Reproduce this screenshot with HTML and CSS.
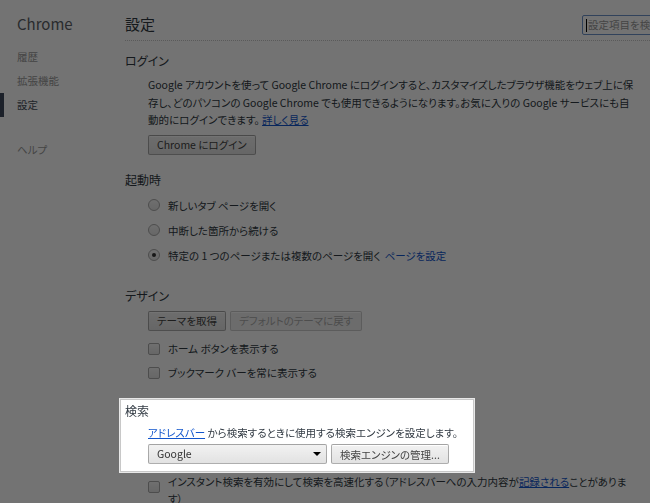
FILE: index.html
```html
<!DOCTYPE html>
<html lang="ja">
<head>
    <meta charset="UTF-8">
    <title>設定</title>
    <link rel="stylesheet" href="styles.css">
</head>
<body>

<div class="page">
    <!-- Left navigation -->
    <nav class="nav">
        <div class="brand">Chrome</div>
        <ul class="nav-list">
            <li>履歴</li>
            <li>拡張機能</li>
            <li class="selected">設定</li>
        </ul>
        <ul class="nav-list help">
            <li>ヘルプ</li>
        </ul>
    </nav>

    <main class="main">
        <header class="header">
            <h1 class="title">設定</h1>
            <div class="search"><span class="caret"></span>設定項目を検索</div>
        </header>

        <section class="section login">
            <h3>ログイン</h3>
            <div class="content">
                <p class="text">Google アカウントを使って Google Chrome にログインすると、カスタマイズしたブラウザ機能をウェブ上に保存し、どのパソコンの Google Chrome でも使用できるようになります。お気に入りの Google サービスにも自<br>動的にログインできます。 <a href="#" class="link">詳しく見る</a></p>
                <button class="btn">Chrome にログイン</button>
            </div>
        </section>

        <section class="section startup">
            <h3>起動時</h3>
            <div class="content">
                <div class="row"><span class="radio"></span>新しいタブ ページを開く</div>
                <div class="row"><span class="radio"></span>中断した箇所から続ける</div>
                <div class="row"><span class="radio checked"></span>特定の 1 つのページまたは複数のページを開く <a href="#" class="link plain">ページを設定</a></div>
            </div>
        </section>

        <section class="section design">
            <h3>デザイン</h3>
            <div class="content">
                <div class="btn-row">
                    <button class="btn">テーマを取得</button>
                    <button class="btn" disabled>デフォルトのテーマに戻す</button>
                </div>
                <div class="row check-row"><span class="checkbox"></span>ホーム ボタンを表示する</div>
                <div class="row check-row"><span class="checkbox"></span>ブックマーク バーを常に表示する</div>
            </div>
        </section>

        <!-- Highlighted section stays above the dimming layer -->
        <section class="section search-section">
            <h3>検索</h3>
            <div class="content">
                <p class="text"><a href="#" class="link">アドレスバー</a> から検索するときに使用する検索エンジンを設定します。</p>
                <div class="btn-row">
                    <div class="select">Google<span class="arrow"></span></div>
                    <button class="btn">検索エンジンの管理...</button>
                </div>
            </div>
        </section>

        <section class="section instant">
            <div class="content">
                <div class="wrap-row"><span class="checkbox"></span><span>インスタント検索を有効にして検索を高速化する（アドレスバーへの入力内容が<a href="#" class="link">記録される</a>ことがありま<br>す）</span></div>
            </div>
        </section>
    </main>
</div>

<div class="overlay"></div>

</body>
</html>
```

FILE: styles.css
```css
body {
    margin: 0;
    overflow: hidden;
    background: #fff;
    font-family: "Noto Sans CJK JP", "Noto Sans", sans-serif;
    font-size: 10.5px;
    font-feature-settings: "palt";
    color: #303942;
}

.page {
    display: flex;
    width: 740px;
}

/* Navigation */
.nav {
    width: 125px;
    flex-shrink: 0;
}

.brand {
    height: 41px;
    padding: 14px 0 0 17px;
    box-sizing: border-box;
    font-size: 15px;
    line-height: 20px;
    color: #5c6166;
}

.nav-list {
    list-style: none;
    margin: 4px 0 0;
    padding: 0;
}

.nav-list li {
    height: 24px;
    line-height: 24px;
    padding-left: 17px;
    color: #999;
}

.nav-list li.selected {
    color: #464e5a;
    border-left: 4px solid #3f4a5e;
    padding-left: 13px;
}

.nav-list.help {
    margin-top: 21px;
}

/* Main column */
.main {
    flex: 1;
}

.header {
    display: flex;
    justify-content: space-between;
    height: 41px;
    border-bottom: 1px dotted #c8c8c8;
    box-sizing: border-box;
}

.title {
    margin: 14px 0 0;
    font-size: 15px;
    font-weight: normal;
    line-height: 20px;
    color: #303942;
}

.search {
    margin-top: 15px;
    width: 158px;
    height: 20px;
    box-sizing: border-box;
    border: 1px solid #6d93c9;
    border-radius: 2px;
    padding-left: 3px;
    line-height: 18px;
    color: #999;
    display: flex;
    align-items: center;
}

.caret {
    width: 1px;
    height: 13px;
    background: #000;
    margin-right: 1px;
}

.section h3 {
    margin: 0;
    font-size: 12px;
    font-weight: normal;
    line-height: 18px;
    color: #303942;
}

.content {
    padding-left: 23px;
    width: 494px;
}

.text {
    margin: 0;
    line-height: 17.5px;
}

.link {
    color: #15c;
}

.link.plain {
    text-decoration: none;
    margin-left: 4px;
}

.btn {
    height: 20px;
    padding: 0 8px;
    border: 1px solid rgba(0, 0, 0, 0.28);
    border-radius: 2px;
    background: linear-gradient(#f2f2f2, #e2e2e2);
    font: inherit;
    color: #444;
    box-shadow: inset 0 1px 0 #fff;
}

.btn:disabled {
    color: #aaa;
    border-color: rgba(0, 0, 0, 0.15);
    background: #f0f0f0;
}

.login {
    padding-top: 11px;
}

.login .text {
    margin-top: 6px;
}

.login .btn {
    margin-top: 6px;
}

.startup {
    padding-top: 16px;
}

.startup h3 {
    margin-bottom: 4px;
}

.row {
    display: flex;
    align-items: center;
    height: 25px;
}

.radio {
    width: 12px;
    height: 12px;
    box-sizing: border-box;
    border: 1px solid #aaa;
    border-radius: 50%;
    background: linear-gradient(#f6f6f6, #e4e4e4);
    margin-right: 8px;
    display: flex;
    align-items: center;
    justify-content: center;
}

.radio.checked::after {
    content: "";
    width: 4px;
    height: 4px;
    border-radius: 50%;
    background: #333;
}

.checkbox {
    width: 12px;
    height: 12px;
    flex-shrink: 0;
    box-sizing: border-box;
    border: 1px solid #aaa;
    border-radius: 2px;
    background: linear-gradient(#f6f6f6, #e4e4e4);
    margin-right: 8px;
}

.design {
    padding-top: 19px;
}

.btn-row {
    display: flex;
    gap: 4px;
    margin-top: 6px;
}

.check-row {
    height: 24px;
}

.design .btn-row {
    margin-bottom: 6px;
}

/* Highlighted search block */
.search-section {
    position: relative;
    z-index: 2;
    width: 348px;
    margin: 14px 0 0 -5px;
    padding: 2px 0 7px 4px;
    background: #fff;
    border: 1px solid #c8c8c8;
    box-shadow: 0 0 0 1px #e8e8e8;
}

.search-section .content {
    width: auto;
}

.search-section .text {
    margin-top: 4px;
}

.search-section .btn-row {
    margin-top: 3px;
}

.select {
    position: relative;
    width: 179px;
    height: 20px;
    box-sizing: border-box;
    border: 1px solid rgba(0, 0, 0, 0.28);
    border-radius: 2px;
    background: linear-gradient(#f2f2f2, #e2e2e2);
    padding-left: 8px;
    line-height: 18px;
    color: #333;
}

.arrow {
    position: absolute;
    right: 5px;
    top: 7px;
    border-left: 4px solid transparent;
    border-right: 4px solid transparent;
    border-top: 4px solid #000;
}

.instant {
    padding-top: 2px;
}

.wrap-row {
    display: flex;
    line-height: 16.5px;
}

.wrap-row .checkbox {
    margin-top: 7px;
}

/* Dimming layer over the page */
.overlay {
    position: fixed;
    top: 0;
    left: 0;
    right: 0;
    bottom: 0;
    background: rgba(0, 0, 0, 0.55);
    z-index: 1;
}
```
